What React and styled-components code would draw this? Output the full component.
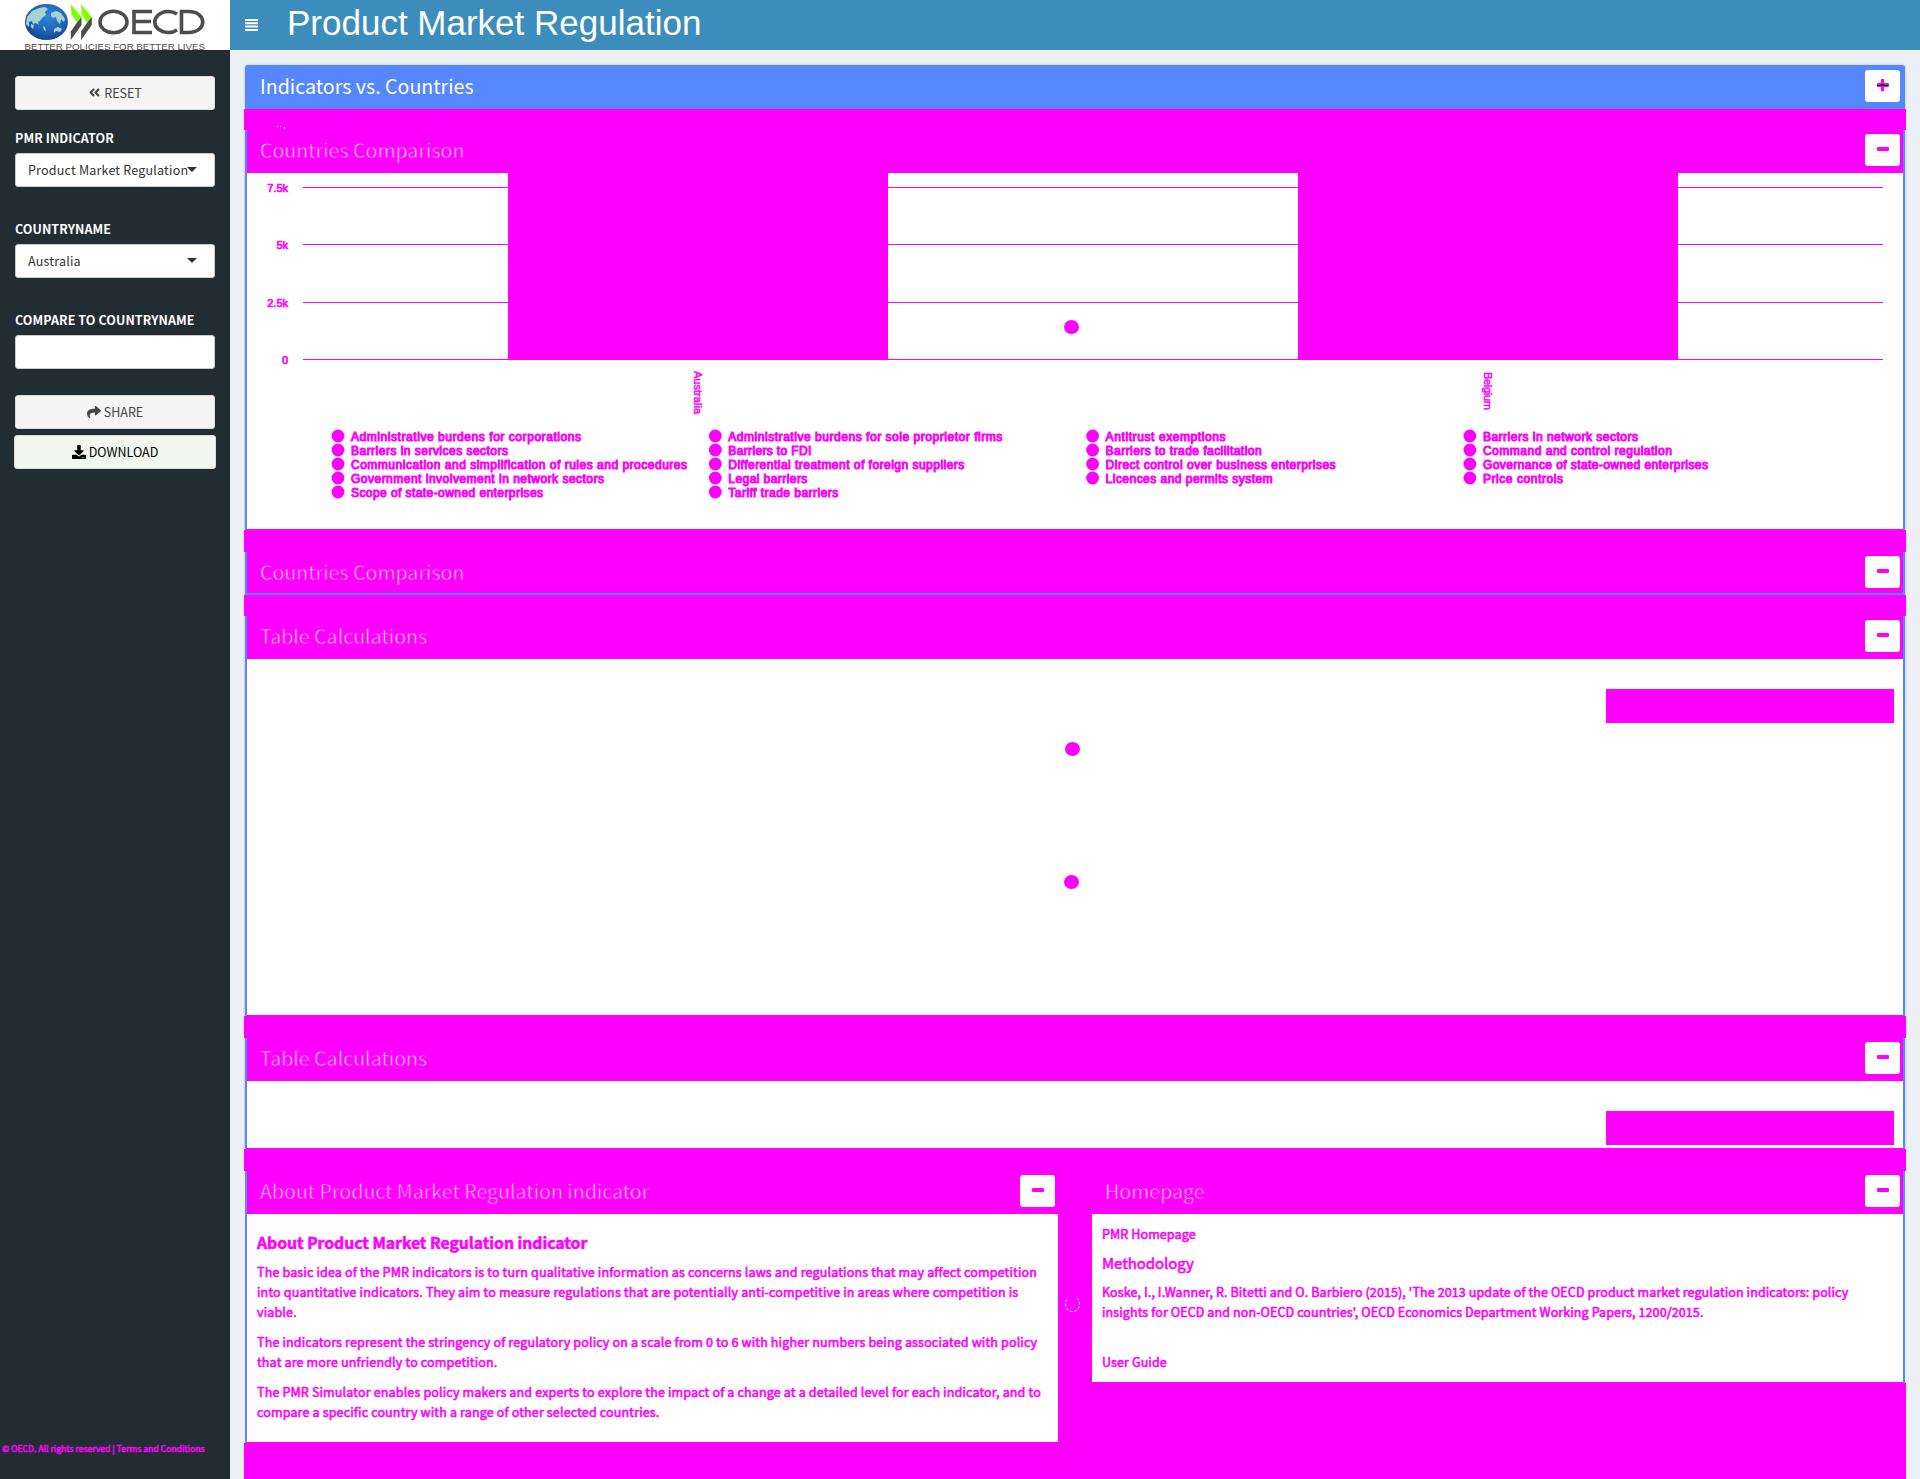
import React from "react";
import styled, { createGlobalStyle, css } from "styled-components";
import { FaShare, FaDownload, FaAngleDoubleLeft } from "react-icons/fa";

const MAGENTA = "#ff00ff";
const BLUE = "#5588ff";
const sans = `"Source Sans Pro", "Noto Sans CJK SC", "Noto Sans", sans-serif`;

const Global = createGlobalStyle`
  * { box-sizing: border-box; }
  body { margin: 0; background: #ecf0f5; font: 12.5px/20px ${sans}; color: #333; overflow: hidden; }
  h1, h2, h3, p { margin: 0; }
`;

const Page = styled.div`
  display: grid;
  grid-template: 50px 1429px / 230px 1fr;
  height: 1479px;
`;
const LogoCell = styled.div`
  background: #fff;
  svg { display: block; overflow: visible; }
`;
const TopBar = styled.header`
  background: #3c8dbc;
  display: flex;
  color: #fff;
  padding-left: 15px;
`;
const MenuIcon = styled.svg`
  width: 13px;
  height: 12px;
  margin-top: 19px;
`;
const AppTitle = styled.h1`
  font: 400 35px/46px "Liberation Sans", Arial, sans-serif;
  margin-left: 29px;
  white-space: nowrap;
`;
const Sidebar = styled.aside`
  background: #222d32;
  padding: 26px 15px 0;
  display: flex;
  flex-direction: column;
`;
const buttonFace = css`
  height: 34px;
  border-radius: 3px;
  display: flex;
  align-items: center;
  white-space: nowrap;
  flex: none;
`;
const Button = styled.button`
  ${buttonFace}
  font: inherit;
  justify-content: center;
  gap: 3px;
  padding: 0;
  border: 1px solid #ddd;
  background: ${(p) => (p.$primary ? "#f1f6f1" : "#f4f4f4")};
  color: ${(p) => (p.$primary ? "#000" : "#444")};
  margin: ${(p) => p.$margin || "0"};
  svg { margin-top: -1px; }
`;
const FieldLabel = styled.label`
  color: #fff;
  font-weight: 700;
  letter-spacing: 0.08px;
  margin-top: ${(p) => p.$top}px;
  height: 25px;
  white-space: nowrap;
`;
const Select = styled.div`
  ${buttonFace}
  background: #fff;
  border: 1px solid #ccc;
  padding: 0 17px 0 12px;
  justify-content: space-between;
  letter-spacing: 0.2px;
`;
const Caret = styled.i`
  border: 5px solid transparent;
  border-top-color: #333;
  border-bottom: 0;
  margin: -2px 0 0 -4px;
`;
const Legal = styled.footer`
  margin: auto -13px 21px;
  font-size: 8.65px;
  color: ${MAGENTA};
  -webkit-text-stroke: 0.5px ${MAGENTA};
  white-space: nowrap;
`;

const Main = styled.main`
  padding: 15px 15px 0;
  display: flex;
  flex-direction: column;
`;
const Strip = styled.div`
  flex: ${(p) => (p.$fill ? "1" : "none")};
  height: ${(p) => p.$h || 22}px;
  margin: 0 -1px;
  background: ${MAGENTA};
  position: relative;
  svg { display: block; }
`;
const Box = styled.section`
  flex: none;
  border: solid ${BLUE};
  border-width: ${(p) => p.$border || "0 2px"};
  border-radius: ${(p) => (p.$first ? "3px 3px 0 0" : "0")};
  background: #fff;
  box-shadow: ${(p) => (p.$flat ? "none" : "0 0 2px rgba(0,0,0,.3)")};
`;
const BoxHead = styled.div`
  background: ${(p) => (p.$blue ? BLUE : MAGENTA)};
  height: ${(p) => p.$h || 43}px;
  padding: ${(p) => (p.$blue ? 5 : 4)}px 3px 0 13px;
  display: flex;
  justify-content: space-between;
`;
const BoxTitle = styled.h3`
  font-size: 19.6px;
  line-height: 32px;
  font-weight: 400;
  color: #fff;
  white-space: nowrap;
  ${(p) => p.$thin && css`-webkit-text-stroke: 0.8px ${MAGENTA};`}
`;
const Toggle = styled.button`
  width: 35px;
  height: 32px;
  flex: none;
  border: 0;
  border-radius: 3px;
  padding: 0;
  background: #fff;
  display: flex;
  justify-content: center;
  svg { margin: 9px 0 0 1px; }
`;
const BoxBody = styled.div`
  height: ${(p) => p.$h}px;
  border-bottom: 1px solid ${MAGENTA};
  position: relative;
  svg { display: block; }
`;
const TableBody = styled(BoxBody)`
  padding: 30px 9px 0 0;
  display: flex;
  justify-content: flex-end;
`;
const SearchBlock = styled.div`
  width: 288px;
  height: 34px;
  background: ${MAGENTA};
`;
const Spinner = styled.span`
  position: absolute;
  left: ${(p) => p.$x}px;
  top: ${(p) => p.$y}px;
  width: 15px;
  height: 14px;
  border-radius: 50%;
  background: ${MAGENTA};
`;
const RingSpinner = styled.span`
  position: absolute;
  left: 820px;
  top: 125px;
  width: 15px;
  height: 16px;
  border-radius: 50%;
  border: 1px dashed #fff;
  border-top-color: transparent;
`;
const Row = styled.div`
  flex: none;
  display: grid;
  grid-template-columns: 813px 813px;
  justify-content: space-between;
  align-items: start;
  background: ${MAGENTA};
  position: relative;
`;
const Column = styled.div`
  display: flex;
  flex-direction: column;
  height: 272px;
`;
const Below = styled.div`
  flex: 1;
  background: ${MAGENTA};
  margin-right: -1px;
`;
const Copy = styled(BoxBody)`
  padding: ${(p) => p.$pad};
  color: ${MAGENTA};
  -webkit-text-stroke: 0.6px ${MAGENTA};
  letter-spacing: ${(p) => p.$track}px;
  white-space: nowrap;
  p { margin-bottom: 10px; }
`;
const CopyHead = styled.h2`
  font-size: ${(p) => p.$size}px;
  font-weight: ${(p) => (p.$bold ? 700 : 400)};
  line-height: 18px;
  letter-spacing: 0;
  margin: 0 0 10px;
`;

const Logo = () => (
  <svg width="230" height="50">
    <defs>
      <radialGradient id="globe" cx=".55" cy=".35" r=".7">
        <stop offset="0" stopColor="#2f86dc" />
        <stop offset=".6" stopColor="#1f62b4" />
        <stop offset="1" stopColor="#123f80" />
      </radialGradient>
    </defs>
    <ellipse cx="46.5" cy="22" rx="21.500" ry="18" fill="url(#globe)" />
    <g fill="#a5d3d4">
      <path d="M27 17l5-6 7-3 6-1 3 2-3 3 1 3-3 2-3 4-2 1 1 3-3-2-3 1-1-3-3 1v5l-3-3z" />
      <path d="M51 13l5-2 5 2 4 6-1 3-3-3-1 5-3-3-1-4-3 1-2-2z" />
      <path d="M43 26l2 1 1 4-2-1zM54 29l4-2 4 2-2 3-4-1-2 2zM31 24l3 1-1 4-2-2z" />
    </g>
    {[0, 10.3].map((dx) => (
      <g key={dx} transform={`translate(${dx} 0)`}>
        <path d="M70.500 4L81.500 17 77 22.500 71.500 14.500z" fill="#7fff00" />
        <path d="M81.500 17v8L70.800 40v-8.500L77 22.500z" fill="#4d4d4f" />
      </g>
    ))}
    <g fill="none" stroke="#4d4d4f" strokeWidth="3.600">
      <ellipse cx="113.500" cy="22" rx="13.500" ry="10.800" />
      <path d="M152 11.500h-18v21h18M134 21.500h17" />
      <path d="M177 14a13.500 10.500 0 1 0 0 16" />
      <path d="M181.500 11.500v21h7c19 0 19-21 0-21z" />
    </g>
    <text x="24.500" y="50" textLength="180.500" lengthAdjust="spacingAndGlyphs" fontFamily="Liberation Sans" fontSize="8.500" fill="#4d4d4f">
      BETTER POLICIES FOR BETTER LIVES
    </text>
  </svg>
);

const SignIcon = ({ plus }) => (
  <svg width="12" height="12">
    {plus && <rect x="4" width="3" height="12" fill={MAGENTA} />}
    <rect y="4" width="12" height="4" rx="1" fill={MAGENTA} />
    {plus && <path d="M0 6.500h11M4 5.500h3" stroke="#000" />}
  </svg>
);

const Header = ({ title, blue, h }) => (
  <BoxHead $blue={blue} $h={h}>
    <BoxTitle $thin={!blue}>{title}</BoxTitle>
    <Toggle aria-label="Toggle"><SignIcon plus={blue} /></Toggle>
  </BoxHead>
);

const ticks = [["7.5k", 14], ["5k", 71], ["2.5k", 129], ["0", 186]];
const legend = [
  [["Administrative burdens for corporations", 230], ["Barriers in services sectors", 157], ["Communication and simplification of rules and procedures", 336], ["Government involvement in network sectors", 253], ["Scope of state-owned enterprises", 192]],
  [["Administrative burdens for sole proprietor firms", 274], ["Barriers to FDI", 83], ["Differential treatment of foreign suppliers", 236], ["Legal barriers", 79], ["Tariff trade barriers", 110]],
  [["Antitrust exemptions", 120], ["Barriers to trade facilitation", 156], ["Direct control over business enterprises", 230], ["Licences and permits system", 167]],
  [["Barriers in network sectors", 155], ["Command and control regulation", 189], ["Governance of state-owned enterprises", 225], ["Price controls", 80]],
];

const Chart = () => (
  <svg width="1656" height="355" fill={MAGENTA} fontFamily="Liberation Sans, Arial, sans-serif">
    <rect x="261" y="0" width="380" height="187" />
    <rect x="1051" y="0" width="380" height="187" />
    {ticks.map(([t, y]) => (
      <g key={t}>
        <rect x="56" y={y} width="1580" height="1" />
        <text x="41" y={y + 5} textAnchor="end" fontSize="11" stroke={MAGENTA} strokeWidth=".7">{t}</text>
      </g>
    ))}
    <g fontSize="11" stroke={MAGENTA} strokeWidth=".5">
      <text transform="translate(447 198) rotate(90)" textLength="43">Australia</text>
      <text transform="translate(1237 199) rotate(90)" textLength="38">Belgium</text>
    </g>
    {legend.map((col, c) =>
      col.map(([t, w], r) => (
        <g key={t}>
          <circle cx={91 + c * 377.3} cy={263 + r * 14} r="6.400" />
          <text x={104 + c * 377.3} y={268 + r * 14} fontSize="12" textLength={w} stroke={MAGENTA} strokeWidth="1">{t}</text>
        </g>
      ))
    )}
  </svg>
);

export default function App() {
  return (
    <>
      <Global />
      <Page>
        <LogoCell><Logo /></LogoCell>
        <TopBar>
          <MenuIcon viewBox="0 0 13 12"><path d="M0 1h13M0 4.300h13M0 7.600h13M0 10.900h13" stroke="#fff" strokeWidth="2" /></MenuIcon>
          <AppTitle>Product Market Regulation</AppTitle>
        </TopBar>
        <Sidebar>
          <Button><FaAngleDoubleLeft size={13} />RESET</Button>
          <FieldLabel $top={18}>PMR INDICATOR</FieldLabel>
          <Select>Product Market Regulation<Caret /></Select>
          <FieldLabel $top={32}>COUNTRYNAME</FieldLabel>
          <Select>Australia<Caret /></Select>
          <FieldLabel $top={32}>COMPARE TO COUNTRYNAME</FieldLabel>
          <Select />
          <Button $margin="26px 0 0"><FaShare size={14} />SHARE</Button>
          <Button $primary $margin="6px -1px 0"><FaDownload size={14} />DOWNLOAD</Button>
          <Legal>© OECD. All rights reserved | Terms and Conditions</Legal>
        </Sidebar>
        <Main>
          <Box $first><Header title="Indicators vs. Countries" blue h={44} /></Box>
          <Strip $h={21}>
            <svg width="60" height="21" fill="#fff">
              <rect x="33" y="17" width="1" height="1" />
              <rect x="36" y="17" width="1" height="1" />
              <rect x="40" y="18" width="1" height="2" />
            </svg>
          </Strip>
          <Box>
            <Header title="Countries Comparison" />
            <BoxBody $h={357}><Chart /><Spinner $x={817} $y={147} /></BoxBody>
          </Box>
          <Strip />
          <Box $border="0 2px 2px"><Header title="Countries Comparison" h={41} /></Box>
          <Strip $h={21} />
          <Box>
            <Header title="Table Calculations" />
            <TableBody $h={357}>
              <SearchBlock /><Spinner $x={818} $y={83} /><Spinner $x={817} $y={216} />
            </TableBody>
          </Box>
          <Strip />
          <Box>
            <Header title="Table Calculations" />
            <TableBody $h={68}><SearchBlock /></TableBody>
          </Box>
          <Strip />
          <Row>
            <Box $border="0 0 0 2px" $flat>
              <Header title="About Product Market Regulation indicator" />
              <Copy $h={229} $pad="20px 0 0 10px" $track={0.16}>
                <CopyHead $size={15.7} $bold>About Product Market Regulation indicator</CopyHead>
                <p>The basic idea of the PMR indicators is to turn qualitative information as concerns laws and regulations that may affect competition<br />into quantitative indicators. They aim to measure regulations that are potentially anti-competitive in areas where competition is<br />viable.</p>
                <p>The indicators represent the stringency of regulatory policy on a scale from 0 to 6 with higher numbers being associated with policy<br />that are more unfriendly to competition.</p>
                <p>The PMR Simulator enables policy makers and experts to explore the impact of a change at a detailed level for each indicator, and to<br />compare a specific country with a range of other selected countries.</p>
              </Copy>
            </Box>
            <Column>
              <Box $border="0 2px 0 0" $flat>
                <Header title="Homepage" />
                <Copy $h={169} $pad="10px 0 0 10px" $track={0.11}>
                  <p>PMR Homepage</p>
                  <CopyHead $size={14.9}>Methodology</CopyHead>
                  <p>Koske, I., I.Wanner, R. Bitetti and O. Barbiero (2015), 'The 2013 update of the OECD product market regulation indicators: policy<br />insights for OECD and non-OECD countries', OECD Economics Department Working Papers, 1200/2015.</p>
                  <p><br />User Guide</p>
                </Copy>
              </Box>
              <Below />
            </Column>
            <RingSpinner />
          </Row>
          <Strip $fill />
        </Main>
      </Page>
    </>
  );
}
